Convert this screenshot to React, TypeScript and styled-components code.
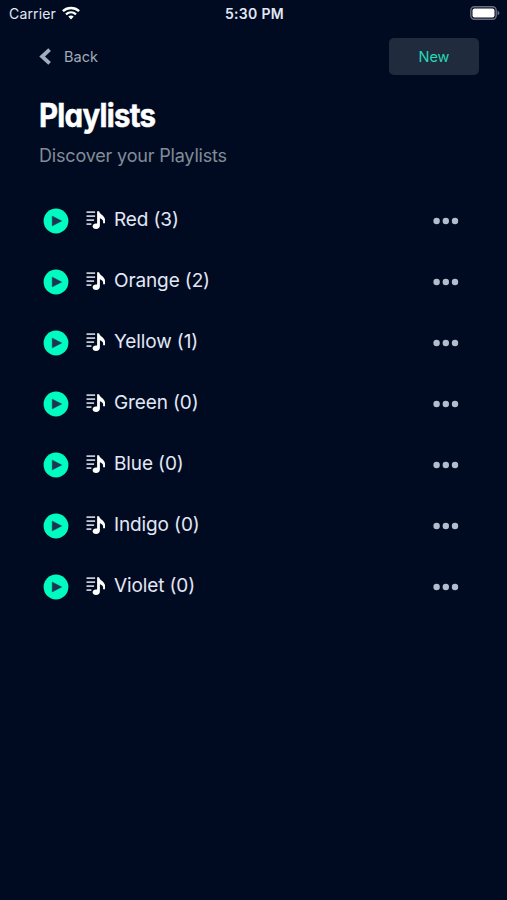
import React from 'react';
import styled, { createGlobalStyle } from 'styled-components';

const GlobalStyle = createGlobalStyle`
  * { box-sizing: border-box; }
  body { margin: 0; background: #000b21; }
  button { border: 0; padding: 0; background: none; font: inherit; color: inherit; }
`;

const Screen = styled.main`
  width: 507px;
  height: 900px;
  overflow: hidden;
  background: #000b21;
  color: #e2e7f5;
  font-family: Inter, 'Liberation Sans', sans-serif;
`;

const StatusBar = styled.header`
  display: grid;
  grid-template-columns: 1fr auto 1fr;
  align-items: center;
  height: 28px;
  padding: 0 7px 0 9px;
  font-size: 14px;
  line-height: 28px;
`;

const Carrier = styled.div`
  display: flex;
  align-items: center;
  gap: 6px;
  letter-spacing: 0.15px;
`;

const Clock = styled.time`
  font-weight: 600;
  letter-spacing: 0.3px;
`;

const StatusIcon = styled.svg`
  justify-self: end;
  margin-top: -2px;
`;

const NavBar = styled.nav`
  display: flex;
  align-items: center;
  justify-content: space-between;
  height: 37px;
  margin-top: 10px;
  padding: 0 28px 0 39px;
`;

const BackButton = styled.button`
  display: flex;
  align-items: center;
  gap: 13px;
  color: #a3abb9;
  font-size: 14.5px;
`;

const NewButton = styled.button`
  width: 90px;
  height: 37px;
  border-radius: 5px;
  background: #202b3e;
  color: #25d9b3;
  font-size: 14.5px;
`;

const Heading = styled.section`
  padding: 23px 39px 0;
`;

const Title = styled.h1`
  width: max-content;
  margin: 0;
  color: #fff;
  font-size: 32px;
  font-weight: 700;
  line-height: 36px;
  letter-spacing: -0.8px;
  font-feature-settings: 'cv11', 'ss03';
  -webkit-text-stroke: 0.5px #fff;
  stroke-linejoin: round;
  transform: scaleX(0.92);
  transform-origin: left;
`;

const Subtitle = styled.p`
  margin: 10px 0 0;
  color: #838b98;
  font-size: 18px;
  line-height: 24px;
  letter-spacing: -0.18px;
`;

const List = styled.ul`
  margin: 22px 0 0;
  padding: 0 48px 0 43px;
  list-style: none;
`;

const Row = styled.li`
  display: flex;
  align-items: center;
  height: 61px;
`;

const IconButton = styled.button`
  display: flex;
`;

const TrackIcon = styled.svg`
  margin: -2px 8px 0 16px;
`;

const Name = styled.span`
  flex: 1;
  margin-top: -1px;
  font-size: 19px;
  line-height: 24px;
  letter-spacing: -0.12px;
`;

const playlists = [
  { name: 'Red', count: 3 },
  { name: 'Orange', count: 2 },
  { name: 'Yellow', count: 1 },
  { name: 'Green', count: 0 },
  { name: 'Blue', count: 0 },
  { name: 'Indigo', count: 0 },
  { name: 'Violet', count: 0 },
];

function PlaylistRow({ name, count }: { name: string; count: number }) {
  return (
    <Row>
      <IconButton aria-label={`Play ${name}`}>
        <svg width="26" height="26" viewBox="0 0 26 26">
          <circle cx="13" cy="13" r="12.4" fill="#00fcc1" />
          <path d="M9.3 8.2 18.6 13 9.3 17.8Z" fill="#1e3450" stroke="#1e3450" strokeWidth=".6" strokeLinejoin="round" />
        </svg>
      </IconButton>
      <TrackIcon width="21" height="20" viewBox="-.6 0 21 20">
        <path d="M.9 2.2H9.5M.9 6.2H9.5M.9 10.2H8.5M.9 14.2H5.8" stroke="#c2c8d5" strokeWidth="1.7" />
        <path d="M11.5 1.2H13.5C13.9 4 19.4 5.9 19.4 9.6V13.2H17.5V11.3C17.5 9.8 15.8 8.8 14.3 8.3V15.2C14.3 17.7 12.8 19 10.5 19C8.3 19 7 17.9 7 16.3C7 14.6 8.5 13.4 10.3 13.4C10.8 13.4 11.2 13.5 11.5 13.6Z" fill="#fff" />
      </TrackIcon>
      <Name>{name} ({count})</Name>
      <IconButton aria-label={`${name} options`}>
        <svg width="26" height="8" viewBox="0 0 26 8" fill="#b4bdce">
          <circle cx="3.6" cy="4" r="3.2" />
          <circle cx="12.8" cy="4" r="3.2" />
          <circle cx="22" cy="4" r="3.2" />
        </svg>
      </IconButton>
    </Row>
  );
}

export default function App() {
  return (
    <Screen>
      <GlobalStyle />
      <StatusBar>
        <Carrier>
          Carrier
          <StatusIcon width="18" height="14" viewBox="0 0 18 14" fill="none" stroke="#fff" strokeWidth="2.4">
            <path d="M.9 5.1C5.5.9 12.5.9 17.1 5.1M4 8.3C6.9 5.7 11.1 5.7 14 8.3" />
            <path d="M6.3 10.6C7.8 9.2 10.2 9.2 11.7 10.6L9 13.4Z" fill="#fff" stroke="none" />
          </StatusIcon>
        </Carrier>
        <Clock>5:30 PM</Clock>
        <StatusIcon width="30" height="14" viewBox="0 0 30 14">
          <rect x=".8" y=".8" width="25.4" height="12.4" rx="3.6" fill="none" stroke="#696f80" strokeWidth="1.4" />
          <rect x="2.5" y="2.5" width="22" height="9" rx="2" fill="#fff" />
          <path d="M27.5 4.6Q31.5 7 27.5 9.4Z" fill="#696f80" />
        </StatusIcon>
      </StatusBar>
      <NavBar>
        <BackButton>
          <svg width="12" height="18" viewBox="0 0 12 18">
            <path d="M10.6 1.6 3.1 8.5 10.6 15.4" fill="none" stroke="#a4adbd" strokeWidth="3.8" />
          </svg>
          Back
        </BackButton>
        <NewButton>New</NewButton>
      </NavBar>
      <Heading>
        <Title>Playlists</Title>
        <Subtitle>Discover your Playlists</Subtitle>
      </Heading>
      <List>
        {playlists.map((item) => <PlaylistRow key={item.name} {...item} />)}
      </List>
    </Screen>
  );
}
